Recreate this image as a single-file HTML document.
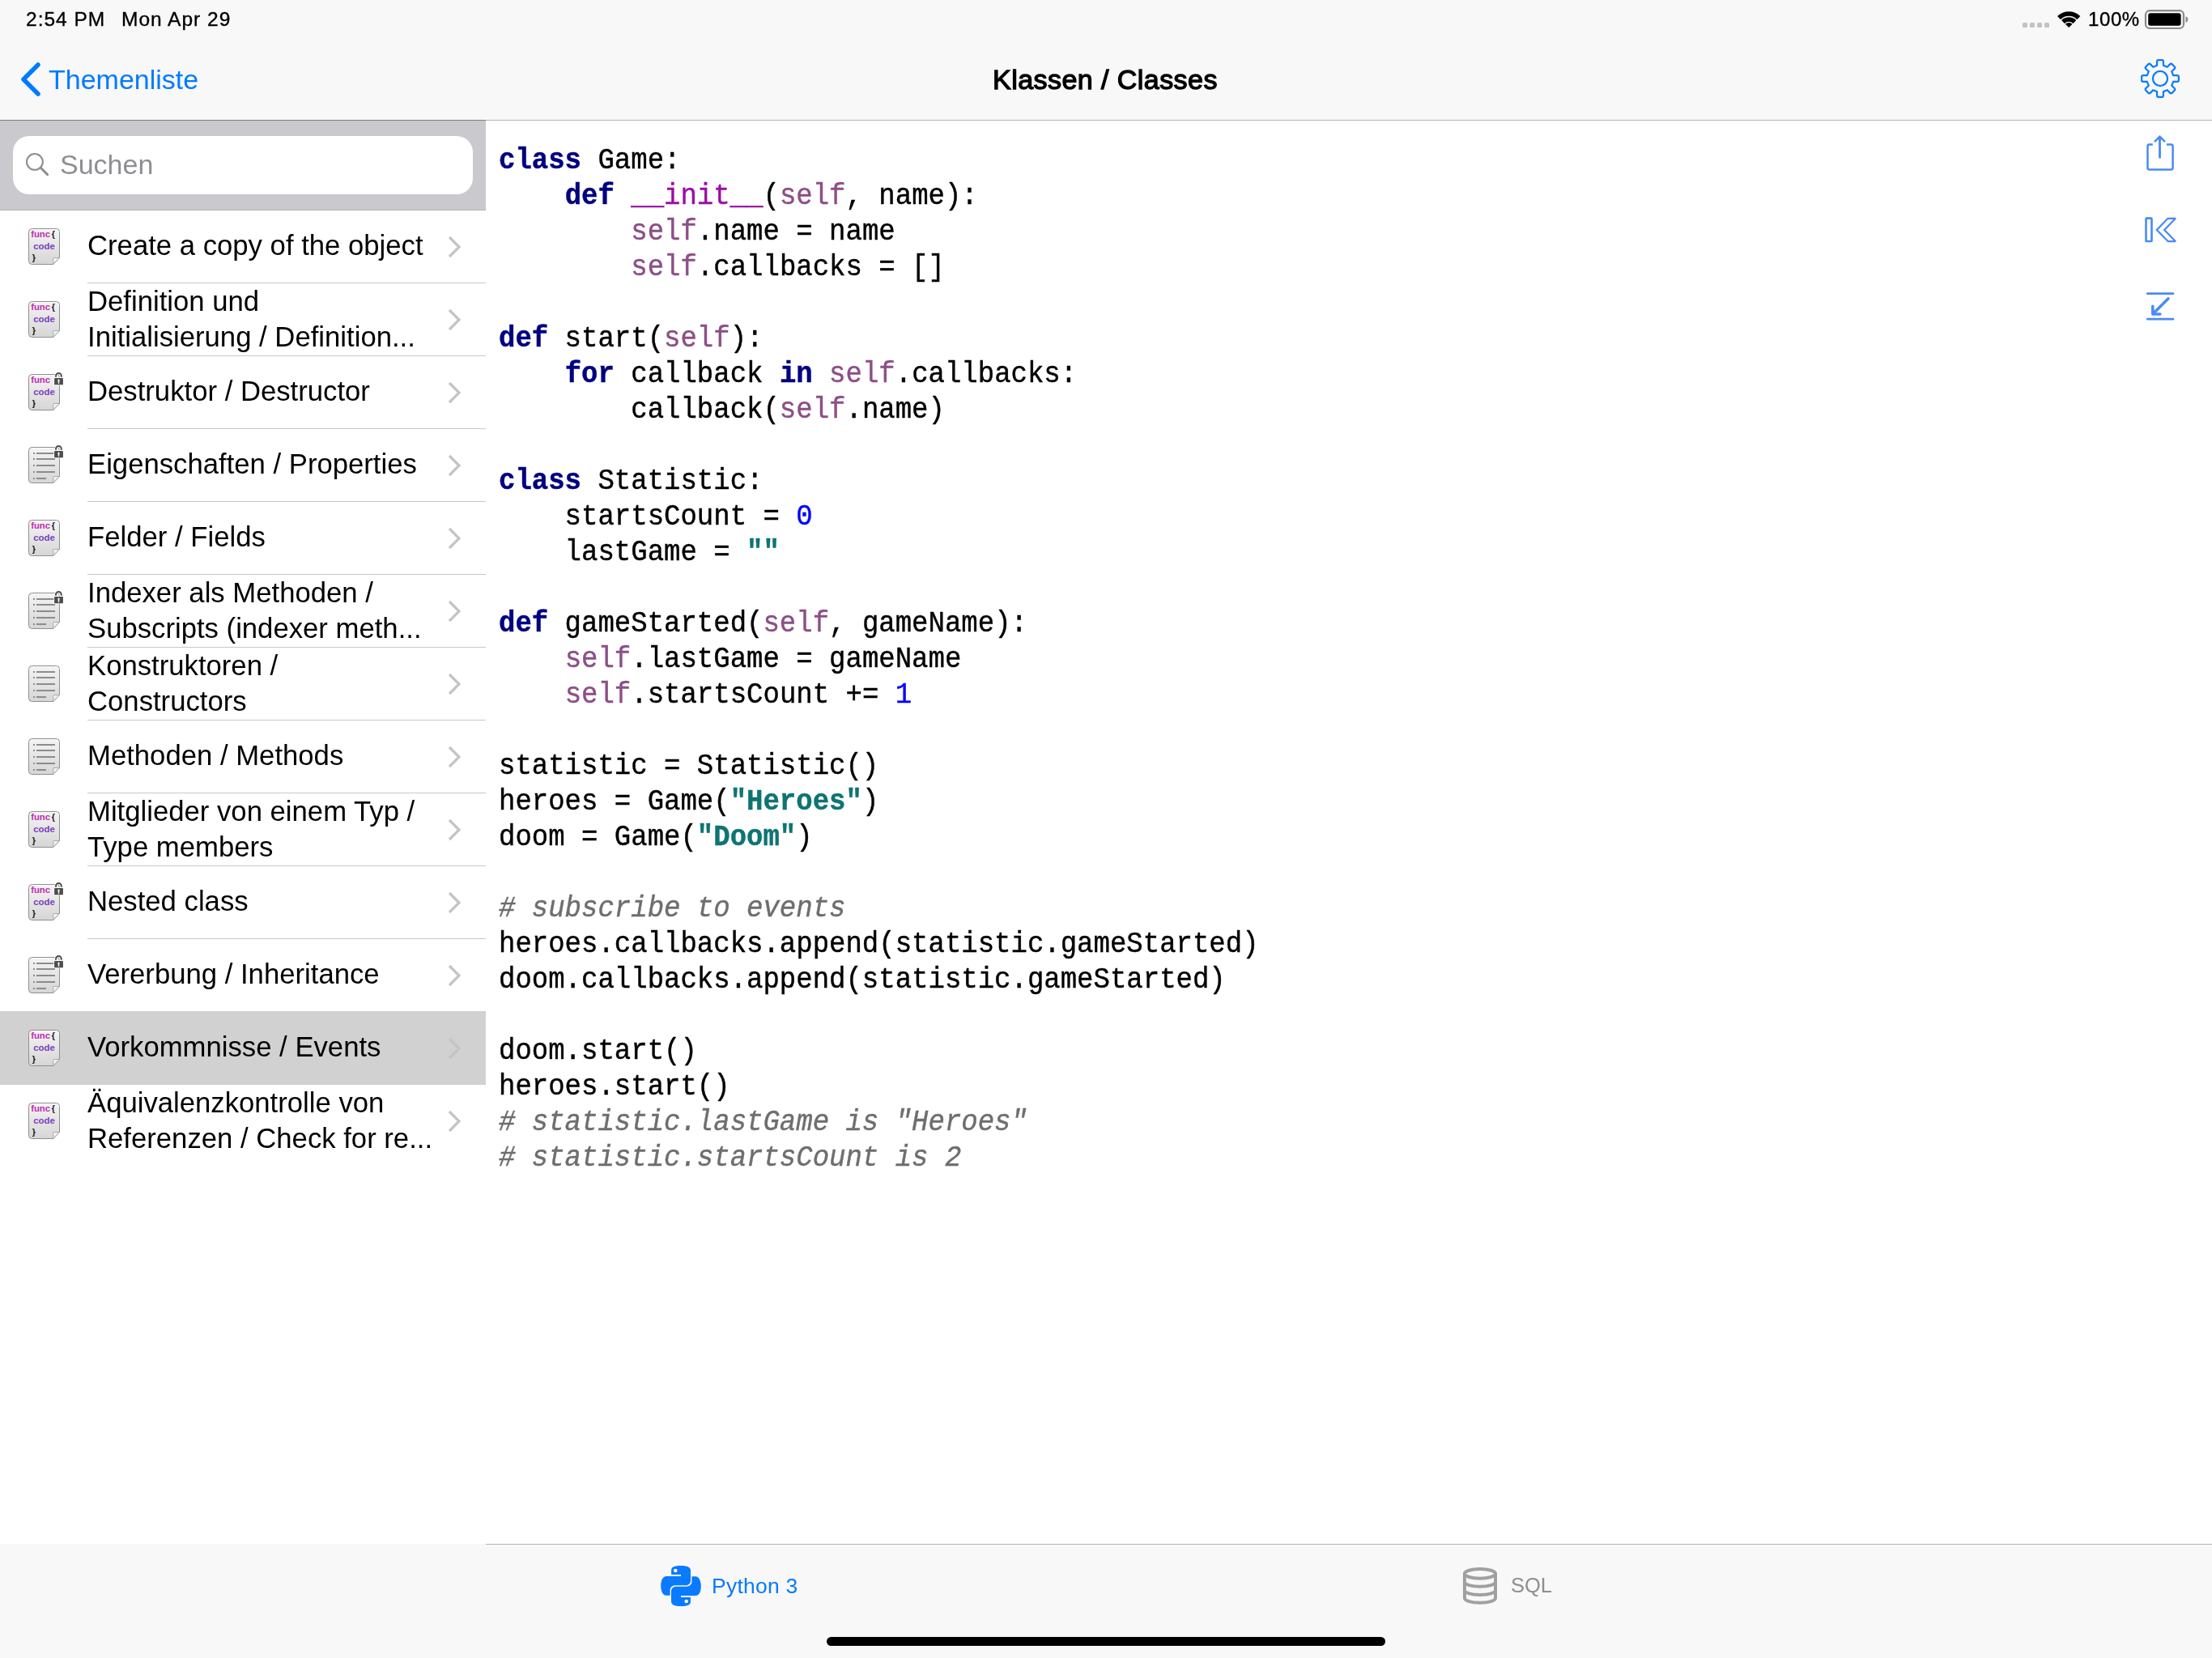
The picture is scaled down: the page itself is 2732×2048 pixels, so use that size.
<!DOCTYPE html>
<html><head><meta charset="utf-8">
<style>
html,body{margin:0;padding:0;}
body{width:2732px;height:2048px;overflow:hidden;position:relative;background:#fff;font-family:"Liberation Sans",sans-serif;color:#000;}
.a{position:absolute;white-space:pre;line-height:1;will-change:transform;}
#top{position:absolute;left:0;top:0;width:2732px;height:148px;background:#f8f8f8;}
#navline{position:absolute;left:0;top:148px;width:2732px;height:1px;background:#b4b4b4;}
#navline2{position:absolute;left:0;top:148px;width:600px;height:1px;background:#7d7d7d;}
#sbg{position:absolute;left:0;top:149px;width:600px;height:110px;background:#c9c9ce;}
#sline{position:absolute;left:0;top:259px;width:600px;height:1px;background:#b3b3b3;}
#field{position:absolute;left:16px;top:168px;width:568px;height:72px;border-radius:20px;background:#fff;}
.row{position:absolute;left:0;width:600px;height:90px;}
.sep{position:absolute;left:108px;width:492px;height:1px;background:#c8c7cc;}
.lt{position:absolute;left:109px;font-size:34px;line-height:43.2px;white-space:pre;}
.chev{position:absolute;left:551px;}
.ic{position:absolute;left:33px;}
#code{position:absolute;left:616px;top:176px;font-family:"Liberation Mono",monospace;font-size:34px;line-height:40px;white-space:pre;color:#000;transform:scaleY(1.1);transform-origin:0 0;will-change:transform;-webkit-text-stroke-width:0.4px;}
.k{color:#000080;font-weight:bold;}
.s{color:#8c4f87;}
.f{color:#9a0fa3;}
.n{color:#0000ff;}
.st{color:#0f7373;font-weight:bold;}
.c{color:#6e6e6e;font-style:italic;}
#tab{position:absolute;left:0;top:1907px;width:2732px;height:141px;background:#f8f8f8;}
#tabline{position:absolute;left:600px;top:1907px;width:2132px;height:1px;background:#b4b4b4;}
#home{position:absolute;left:1021px;top:2022px;width:690px;height:11px;border-radius:6px;background:#000;}
</style></head><body>
<div id="top"></div>
<div id="navline"></div>
<div id="navline2"></div>
<!-- status bar -->
<div class="a" style="left:32px;top:12px;font-size:24.5px;letter-spacing:1.0px;-webkit-text-stroke:0.35px #000;">2:54 PM</div>
<div class="a" style="left:150px;top:12px;font-size:24.5px;letter-spacing:1.0px;-webkit-text-stroke:0.35px #000;">Mon Apr 29</div>
<div class="a" style="left:2579px;top:12px;font-size:24px;letter-spacing:0.6px;-webkit-text-stroke:0.35px #000;">100%</div>

<!-- nav -->
<svg class="a" style="left:0;top:0" width="80" height="148"><polyline points="47,80 29,98 47,116" fill="none" stroke="#007aff" stroke-width="5.5" stroke-linecap="round" stroke-linejoin="round"/></svg>
<div class="a" style="left:60px;top:81px;font-size:34px;color:#007aff;">Themenliste</div>
<div class="a" style="left:1226px;top:80.5px;font-size:34px;letter-spacing:0.45px;-webkit-text-stroke:1.3px #000;">Klassen / Classes</div>

<!-- sidebar search -->
<div id="sbg"></div>
<div id="sline"></div>
<div id="field"></div>
<svg class="a" style="left:28px;top:185px" width="36" height="36"><circle cx="14.9" cy="14.9" r="9.9" fill="none" stroke="#8e8e93" stroke-width="2.1"/><line x1="22" y1="22" x2="30.6" y2="30.6" stroke="#8e8e93" stroke-width="2.9" stroke-linecap="round"/></svg>
<div class="a" style="left:74px;top:185.5px;font-size:34px;color:#8e8e93;">Suchen</div>

<!-- LIST -->
<div id="list">
<svg width="0" height="0" style="position:absolute">
<defs>
<linearGradient id="pg" x1="0" y1="0" x2="0" y2="1"><stop offset="0" stop-color="#f4f4f4"/><stop offset="1" stop-color="#d6d6d6"/></linearGradient>
<linearGradient id="fg" x1="0" y1="0" x2="1" y2="1"><stop offset="0" stop-color="#ffffff"/><stop offset="1" stop-color="#cfcfcf"/></linearGradient>
<symbol id="page" viewBox="0 0 48 48"><path d="M6.5,2.5 H36.5 Q40.5,2.5 40.5,6.5 V38.5 L32.8,46.5 H6.5 Q2.5,46.5 2.5,42.5 V6.5 Q2.5,2.5 6.5,2.5 Z" fill="url(#pg)" stroke="#8f8f8f" stroke-width="1"/><path d="M6.8,3.7 H36.2 Q39.3,3.7 39.3,6.8" fill="none" stroke="#fff" stroke-opacity="0.7" stroke-width="1"/><path d="M32.8,46.5 V39 Q32.8,38.5 33.3,38.5 H40.5 Z" fill="url(#fg)" stroke="#9a9a9a" stroke-width="0.8"/></symbol>
<symbol id="lines" viewBox="0 0 48 48"><g fill="#8c8c8c"><rect x="8" y="9" width="2" height="2"/><rect x="12" y="9" width="23" height="2"/><rect x="8" y="16" width="2" height="2"/><rect x="12" y="16" width="23" height="2"/><rect x="8" y="24" width="2" height="2"/><rect x="12" y="24" width="23" height="2"/><rect x="8" y="32" width="2" height="2"/><rect x="12" y="32" width="23" height="2"/><rect x="8" y="40" width="2" height="2"/><rect x="12" y="40" width="12" height="2"/></g></symbol>
<symbol id="lock" viewBox="0 0 48 48"><path d="M36,6 V4.4 A3.4,3.4 0 0 1 42.8,4.4 V6" fill="none" stroke="#ffffff" stroke-opacity="0.85" stroke-width="3.6"/><rect x="33.2" y="6" width="12.6" height="10.2" rx="1.5" fill="#fff" fill-opacity="0.85"/><path d="M36,5.8 V4.4 A3.4,3.4 0 0 1 42.8,4.4 V5.8" fill="none" stroke="#4a4a4a" stroke-width="1.9"/><rect x="34.1" y="6.9" width="10.8" height="8.4" rx="0.6" fill="#4d4d4d"/><path d="M39.5,8.6 a1.15,1.15 0 0 1 0.85,1.9 L40.1,14 H38.9 L38.65,10.5 a1.15,1.15 0 0 1 0.85,-1.9 z" fill="#fff"/></symbol>
</defs></svg>
<div class="sep" style="top:349px"></div>
<svg class="ic" style="top:280px" width="48" height="48" viewBox="0 0 48 48"><use href="#page" x="0" y="0" width="48" height="48"/><text x="5.2" y="12.6" font-family="Liberation Sans" font-weight="bold" font-size="11.3" fill="#c22cb3">func</text><text x="30.8" y="13.2" font-family="Liberation Sans" font-weight="bold" font-size="10.5" fill="#111">{</text><text x="8.2" y="27.7" font-family="Liberation Sans" font-weight="bold" font-size="11.4" fill="#7b40c0">code</text><text x="6.8" y="41.8" font-family="Liberation Sans" font-weight="bold" font-size="10.5" fill="#111">}</text></svg>
<div class="a" style="left:108px;top:286.4px;font-size:34.7px">Create a copy of the object</div>
<svg class="chev" style="top:289px" width="22" height="32"><polyline points="4,4 16,16 4,28" fill="none" stroke="#c4c4c8" stroke-width="3.2" stroke-linecap="butt" stroke-linejoin="miter"/></svg>
<div class="sep" style="top:439px"></div>
<svg class="ic" style="top:370px" width="48" height="48" viewBox="0 0 48 48"><use href="#page" x="0" y="0" width="48" height="48"/><text x="5.2" y="12.6" font-family="Liberation Sans" font-weight="bold" font-size="11.3" fill="#c22cb3">func</text><text x="30.8" y="13.2" font-family="Liberation Sans" font-weight="bold" font-size="10.5" fill="#111">{</text><text x="8.2" y="27.7" font-family="Liberation Sans" font-weight="bold" font-size="11.4" fill="#7b40c0">code</text><text x="6.8" y="41.8" font-family="Liberation Sans" font-weight="bold" font-size="10.5" fill="#111">}</text></svg>
<div class="a" style="left:108px;top:354.5px;font-size:34.7px">Definition und</div>
<div class="a" style="left:108px;top:398.6px;font-size:34.7px">Initialisierung / Definition...</div>
<svg class="chev" style="top:379px" width="22" height="32"><polyline points="4,4 16,16 4,28" fill="none" stroke="#c4c4c8" stroke-width="3.2" stroke-linecap="butt" stroke-linejoin="miter"/></svg>
<div class="sep" style="top:529px"></div>
<svg class="ic" style="top:460px" width="48" height="48" viewBox="0 0 48 48"><use href="#page" x="0" y="0" width="48" height="48"/><text x="5.2" y="12.6" font-family="Liberation Sans" font-weight="bold" font-size="11.3" fill="#c22cb3">func</text><text x="8.2" y="27.7" font-family="Liberation Sans" font-weight="bold" font-size="11.4" fill="#7b40c0">code</text><text x="6.8" y="41.8" font-family="Liberation Sans" font-weight="bold" font-size="10.5" fill="#111">}</text><use href="#lock" x="0" y="0" width="48" height="48"/></svg>
<div class="a" style="left:108px;top:466.4px;font-size:34.7px">Destruktor / Destructor</div>
<svg class="chev" style="top:469px" width="22" height="32"><polyline points="4,4 16,16 4,28" fill="none" stroke="#c4c4c8" stroke-width="3.2" stroke-linecap="butt" stroke-linejoin="miter"/></svg>
<div class="sep" style="top:619px"></div>
<svg class="ic" style="top:550px" width="48" height="48" viewBox="0 0 48 48"><use href="#page" x="0" y="0" width="48" height="48"/><use href="#lines" x="0" y="0" width="48" height="48"/><use href="#lock" x="0" y="0" width="48" height="48"/></svg>
<div class="a" style="left:108px;top:556.4px;font-size:34.7px">Eigenschaften / Properties</div>
<svg class="chev" style="top:559px" width="22" height="32"><polyline points="4,4 16,16 4,28" fill="none" stroke="#c4c4c8" stroke-width="3.2" stroke-linecap="butt" stroke-linejoin="miter"/></svg>
<div class="sep" style="top:709px"></div>
<svg class="ic" style="top:640px" width="48" height="48" viewBox="0 0 48 48"><use href="#page" x="0" y="0" width="48" height="48"/><text x="5.2" y="12.6" font-family="Liberation Sans" font-weight="bold" font-size="11.3" fill="#c22cb3">func</text><text x="30.8" y="13.2" font-family="Liberation Sans" font-weight="bold" font-size="10.5" fill="#111">{</text><text x="8.2" y="27.7" font-family="Liberation Sans" font-weight="bold" font-size="11.4" fill="#7b40c0">code</text><text x="6.8" y="41.8" font-family="Liberation Sans" font-weight="bold" font-size="10.5" fill="#111">}</text></svg>
<div class="a" style="left:108px;top:646.4px;font-size:34.7px">Felder / Fields</div>
<svg class="chev" style="top:649px" width="22" height="32"><polyline points="4,4 16,16 4,28" fill="none" stroke="#c4c4c8" stroke-width="3.2" stroke-linecap="butt" stroke-linejoin="miter"/></svg>
<div class="sep" style="top:799px"></div>
<svg class="ic" style="top:730px" width="48" height="48" viewBox="0 0 48 48"><use href="#page" x="0" y="0" width="48" height="48"/><use href="#lines" x="0" y="0" width="48" height="48"/><use href="#lock" x="0" y="0" width="48" height="48"/></svg>
<div class="a" style="left:108px;top:714.5px;font-size:34.7px">Indexer als Methoden /</div>
<div class="a" style="left:108px;top:758.6px;font-size:34.7px">Subscripts (indexer meth...</div>
<svg class="chev" style="top:739px" width="22" height="32"><polyline points="4,4 16,16 4,28" fill="none" stroke="#c4c4c8" stroke-width="3.2" stroke-linecap="butt" stroke-linejoin="miter"/></svg>
<div class="sep" style="top:889px"></div>
<svg class="ic" style="top:820px" width="48" height="48" viewBox="0 0 48 48"><use href="#page" x="0" y="0" width="48" height="48"/><use href="#lines" x="0" y="0" width="48" height="48"/></svg>
<div class="a" style="left:108px;top:804.5px;font-size:34.7px">Konstruktoren /</div>
<div class="a" style="left:108px;top:848.6px;font-size:34.7px">Constructors</div>
<svg class="chev" style="top:829px" width="22" height="32"><polyline points="4,4 16,16 4,28" fill="none" stroke="#c4c4c8" stroke-width="3.2" stroke-linecap="butt" stroke-linejoin="miter"/></svg>
<div class="sep" style="top:979px"></div>
<svg class="ic" style="top:910px" width="48" height="48" viewBox="0 0 48 48"><use href="#page" x="0" y="0" width="48" height="48"/><use href="#lines" x="0" y="0" width="48" height="48"/></svg>
<div class="a" style="left:108px;top:916.4px;font-size:34.7px">Methoden / Methods</div>
<svg class="chev" style="top:919px" width="22" height="32"><polyline points="4,4 16,16 4,28" fill="none" stroke="#c4c4c8" stroke-width="3.2" stroke-linecap="butt" stroke-linejoin="miter"/></svg>
<div class="sep" style="top:1069px"></div>
<svg class="ic" style="top:1000px" width="48" height="48" viewBox="0 0 48 48"><use href="#page" x="0" y="0" width="48" height="48"/><text x="5.2" y="12.6" font-family="Liberation Sans" font-weight="bold" font-size="11.3" fill="#c22cb3">func</text><text x="30.8" y="13.2" font-family="Liberation Sans" font-weight="bold" font-size="10.5" fill="#111">{</text><text x="8.2" y="27.7" font-family="Liberation Sans" font-weight="bold" font-size="11.4" fill="#7b40c0">code</text><text x="6.8" y="41.8" font-family="Liberation Sans" font-weight="bold" font-size="10.5" fill="#111">}</text></svg>
<div class="a" style="left:108px;top:984.5px;font-size:34.7px">Mitglieder von einem Typ /</div>
<div class="a" style="left:108px;top:1028.6px;font-size:34.7px">Type members</div>
<svg class="chev" style="top:1009px" width="22" height="32"><polyline points="4,4 16,16 4,28" fill="none" stroke="#c4c4c8" stroke-width="3.2" stroke-linecap="butt" stroke-linejoin="miter"/></svg>
<div class="sep" style="top:1159px"></div>
<svg class="ic" style="top:1090px" width="48" height="48" viewBox="0 0 48 48"><use href="#page" x="0" y="0" width="48" height="48"/><text x="5.2" y="12.6" font-family="Liberation Sans" font-weight="bold" font-size="11.3" fill="#c22cb3">func</text><text x="8.2" y="27.7" font-family="Liberation Sans" font-weight="bold" font-size="11.4" fill="#7b40c0">code</text><text x="6.8" y="41.8" font-family="Liberation Sans" font-weight="bold" font-size="10.5" fill="#111">}</text><use href="#lock" x="0" y="0" width="48" height="48"/></svg>
<div class="a" style="left:108px;top:1096.4px;font-size:34.7px">Nested class</div>
<svg class="chev" style="top:1099px" width="22" height="32"><polyline points="4,4 16,16 4,28" fill="none" stroke="#c4c4c8" stroke-width="3.2" stroke-linecap="butt" stroke-linejoin="miter"/></svg>
<svg class="ic" style="top:1180px" width="48" height="48" viewBox="0 0 48 48"><use href="#page" x="0" y="0" width="48" height="48"/><use href="#lines" x="0" y="0" width="48" height="48"/><use href="#lock" x="0" y="0" width="48" height="48"/></svg>
<div class="a" style="left:108px;top:1186.4px;font-size:34.7px">Vererbung / Inheritance</div>
<svg class="chev" style="top:1189px" width="22" height="32"><polyline points="4,4 16,16 4,28" fill="none" stroke="#c4c4c8" stroke-width="3.2" stroke-linecap="butt" stroke-linejoin="miter"/></svg>
<div style="position:absolute;left:0;top:1249px;width:600px;height:91px;background:#d1d1d1"></div>
<svg class="ic" style="top:1270px" width="48" height="48" viewBox="0 0 48 48"><use href="#page" x="0" y="0" width="48" height="48"/><text x="5.2" y="12.6" font-family="Liberation Sans" font-weight="bold" font-size="11.3" fill="#c22cb3">func</text><text x="30.8" y="13.2" font-family="Liberation Sans" font-weight="bold" font-size="10.5" fill="#111">{</text><text x="8.2" y="27.7" font-family="Liberation Sans" font-weight="bold" font-size="11.4" fill="#7b40c0">code</text><text x="6.8" y="41.8" font-family="Liberation Sans" font-weight="bold" font-size="10.5" fill="#111">}</text></svg>
<div class="a" style="left:108px;top:1276.4px;font-size:34.7px">Vorkommnisse / Events</div>
<svg class="chev" style="top:1279px" width="22" height="32"><polyline points="4,4 16,16 4,28" fill="none" stroke="#c4c4c8" stroke-width="3.2" stroke-linecap="butt" stroke-linejoin="miter"/></svg>
<svg class="ic" style="top:1360px" width="48" height="48" viewBox="0 0 48 48"><use href="#page" x="0" y="0" width="48" height="48"/><text x="5.2" y="12.6" font-family="Liberation Sans" font-weight="bold" font-size="11.3" fill="#c22cb3">func</text><text x="30.8" y="13.2" font-family="Liberation Sans" font-weight="bold" font-size="10.5" fill="#111">{</text><text x="8.2" y="27.7" font-family="Liberation Sans" font-weight="bold" font-size="11.4" fill="#7b40c0">code</text><text x="6.8" y="41.8" font-family="Liberation Sans" font-weight="bold" font-size="10.5" fill="#111">}</text></svg>
<div class="a" style="left:108px;top:1344.5px;font-size:34.7px">Äquivalenzkontrolle von</div>
<div class="a" style="left:108px;top:1388.6px;font-size:34.7px">Referenzen / Check for re...</div>
<svg class="chev" style="top:1369px" width="22" height="32"><polyline points="4,4 16,16 4,28" fill="none" stroke="#c4c4c8" stroke-width="3.2" stroke-linecap="butt" stroke-linejoin="miter"/></svg>
</div>
<!-- code -->
<div id="code"><span class="k">class</span> Game:
    <span class="k">def</span> <span class="f">__init__</span>(<span class="s">self</span>, name):
        <span class="s">self</span>.name = name
        <span class="s">self</span>.callbacks = []

<span class="k">def</span> start(<span class="s">self</span>):
    <span class="k">for</span> callback <span class="k">in</span> <span class="s">self</span>.callbacks:
        callback(<span class="s">self</span>.name)

<span class="k">class</span> Statistic:
    startsCount = <span class="n">0</span>
    lastGame = <span class="st">""</span>

<span class="k">def</span> gameStarted(<span class="s">self</span>, gameName):
    <span class="s">self</span>.lastGame = gameName
    <span class="s">self</span>.startsCount += <span class="n">1</span>

statistic = Statistic()
heroes = Game(<span class="st">"Heroes"</span>)
doom = Game(<span class="st">"Doom"</span>)

<span class="c"># subscribe to events</span>
heroes.callbacks.append(statistic.gameStarted)
doom.callbacks.append(statistic.gameStarted)

doom.start()
heroes.start()
<span class="c"># statistic.lastGame is "Heroes"</span>
<span class="c"># statistic.startsCount is 2</span></div>
<!-- tab bar -->
<div id="tab"></div>
<div id="tabline"></div>
<div class="a" style="left:878.5px;top:1945.8px;font-size:26.5px;letter-spacing:0.25px;color:#0a7aff;">Python 3</div>
<div class="a" style="left:1865.5px;top:1946.2px;font-size:25.5px;color:#8e8e8e;">SQL</div>
<div id="home"></div>
<!-- status icons -->
<svg class="a" style="left:2490px;top:5px" width="220" height="40" viewBox="2490 5 220 40">
<g fill="#c2c2c2"><rect x="2498" y="28" width="6" height="6" rx="1.6"/><rect x="2507" y="28" width="6" height="6" rx="1.6"/><rect x="2516" y="28" width="6" height="6" rx="1.6"/><rect x="2525" y="28" width="6" height="6" rx="1.6"/></g>
<g fill="none" stroke="#000" stroke-width="5.5"><path d="M2543.0,22.0 A17.2,17.2 0 0 1 2567.4,22.0"/><path d="M2548.0,27.0 A10.2,10.2 0 0 1 2562.4,27.0"/></g>
<path d="M2550.9,29.7 A6,6 0 0 1 2559.5,29.7 L2555.2,34 Z" fill="#000"/>
<rect x="2650" y="13.2" width="47" height="21.8" rx="5" fill="none" stroke="#8a8a8a" stroke-width="2.2"/>
<rect x="2653.2" y="16.2" width="40.4" height="15.6" rx="2.8" fill="#000"/>
<path d="M2699.5,20.2 Q2702.3,21 2702.3,24 Q2702.3,27 2699.5,27.8 Z" fill="#8a8a8a"/>
</svg>
<!-- gear -->
<svg class="a" style="left:2638px;top:67px" width="60" height="60" viewBox="0 0 60 60"><path d="M26.06,13.80 L26.06,9.00 Q26.06,7.10 27.96,7.10 L32.04,7.10 Q33.94,7.10 33.94,9.00 L33.94,13.80 L38.67,15.76 L42.06,12.36 Q43.41,11.02 44.75,12.36 L47.64,15.25 Q48.98,16.59 47.64,17.94 L44.24,21.33 L46.20,26.06 L51.00,26.06 Q52.90,26.06 52.90,27.96 L52.90,32.04 Q52.90,33.94 51.00,33.94 L46.20,33.94 L44.24,38.67 L47.64,42.06 Q48.98,43.41 47.64,44.75 L44.75,47.64 Q43.41,48.98 42.06,47.64 L38.67,44.24 L33.94,46.20 L33.94,51.00 Q33.94,52.90 32.04,52.90 L27.96,52.90 Q26.06,52.90 26.06,51.00 L26.06,46.20 L21.33,44.24 L17.94,47.64 Q16.59,48.98 15.25,47.64 L12.36,44.75 Q11.02,43.41 12.36,42.06 L15.76,38.67 L13.80,33.94 L9.00,33.94 Q7.10,33.94 7.10,32.04 L7.10,27.96 Q7.10,26.06 9.00,26.06 L13.80,26.06 L15.76,21.33 L12.36,17.94 Q11.02,16.59 12.36,15.25 L15.25,12.36 Q16.59,11.02 17.94,12.36 L21.33,15.76 Z" fill="none" stroke="#0a7aff" stroke-width="2.2" stroke-linejoin="miter"/><circle cx="30" cy="30" r="9.05" fill="none" stroke="#0a7aff" stroke-width="2.2"/></svg>
<!-- side action icons -->
<svg class="a" style="left:2640px;top:160px" width="60" height="260" viewBox="2640 160 60 260">
<g fill="none" stroke="#4a8af6" stroke-width="2.5">
<path d="M2658.8,178.5 H2654.7 Q2652.5,178.5 2652.5,180.7 V207.2 Q2652.5,209.4 2654.7,209.4 H2681.4 Q2683.6,209.4 2683.6,207.2 V180.7 Q2683.6,178.5 2681.4,178.5 H2676"/>
<path d="M2661,175.2 L2667.5,168.8 L2674,175.2"/>
<path d="M2667.5,168.5 V195.5" stroke-width="2.8"/>
<rect x="2650.5" y="269.6" width="7" height="28.4" rx="0.6" stroke-width="2.6"/>
<path d="M2677.5,269.8 H2687 L2673.2,284 L2687,298.2 H2677.8 L2663.8,284 Z" stroke-width="2.3" stroke-linejoin="miter" stroke-miterlimit="2.2"/>
<path d="M2652.3,362.7 H2684 M2652.3,394.2 H2684" stroke-width="2.8" stroke-linecap="round"/>
<path d="M2678,368.8 L2659.5,387.3 M2658.8,378.2 V388 H2667.9" stroke-width="3.5" stroke-linecap="round" stroke-linejoin="round"/>
</g></svg>
<!-- python logo -->
<svg class="a" style="left:810px;top:1928px" width="62" height="62" viewBox="0 0 62 62">
<g id="py"><path d="M19.1,17.0 L19.1,11.5 C19.1,7.5 23,6 31,6 C39,6 43,8 43,12 L43,24.3 C43,28 40.5,30.3 37,30.3 L24.3,30.3 C20.5,30.3 17.6,33 17.6,36 L17.6,42.8 L13.1,42.8 C8.5,42.8 6.2,37 6.2,31 C6.2,24 8.5,18.9 13.1,18.9 L31,18.9 L31,17 Z" fill="#0a7aff"/><circle cx="24.3" cy="12" r="2.3" fill="#f8f8f8"/></g>
<use href="#py" transform="rotate(180 31 31)"/>
</svg>
<!-- db icon -->
<svg class="a" style="left:1798px;top:1928px" width="60" height="60" viewBox="0 0 60 60"><g fill="none" stroke="#a0a0a0" stroke-width="4"><ellipse cx="29.95" cy="15.85" rx="19.05" ry="5.85"/><path d="M10.9,15.85 V46 A19.05,5.85 0 0 0 49,46 V15.85 M10.9,26 A19.05,5.85 0 0 0 49,26 M10.9,36.2 A19.05,5.85 0 0 0 49,36.2"/></g></svg>
</body></html>
